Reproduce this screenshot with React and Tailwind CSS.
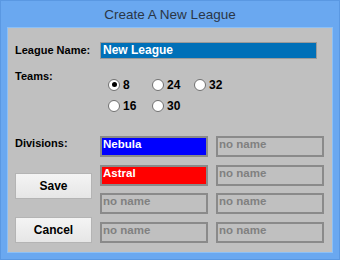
import React, { useState } from 'react';

const labelFont = { fontFamily: '"Liberation Sans", Arial, sans-serif' };

function Radio({ label, checked, onClick }) {
  return (
    <div className="flex items-center h-[21.5px] cursor-pointer" onClick={onClick}>
      <span className="w-[12px] h-[12px] rounded-full bg-white border border-[#707070] flex items-center justify-center">
        {checked && <span className="w-[5px] h-[5px] rounded-full bg-black" />}
      </span>
      <span className="ml-[3px] text-[12px] font-bold text-black leading-none">{label}</span>
    </div>
  );
}

function DivisionBox({ name, color }) {
  const filled = !!name;
  return (
    <div
      className={`h-[21px] border-2 border-[#8a8a8a] px-[1px] text-[11.5px] font-bold leading-[13px] ${
        filled ? 'text-white' : 'text-[#808080]'
      }`}
      style={filled ? { backgroundColor: color } : undefined}
    >
      {filled ? name : 'no name'}
    </div>
  );
}

export default function App() {
  const [teams, setTeams] = useState(8);
  const divisions = [
    { name: 'Nebula', color: '#0000ff' },
    { name: '', color: '' },
    { name: 'Astral', color: '#ff0000' },
    { name: '', color: '' },
    { name: '', color: '' },
    { name: '', color: '' },
    { name: '', color: '' },
    { name: '', color: '' },
  ];

  return (
    <div className="w-[340px] h-[260px] bg-[#6aa8f0] border border-[#5a98e2] flex flex-col" style={labelFont}>
      {/* title */}
      <div className="h-[26px] flex items-center justify-center text-[13.5px] text-[#2a3645] pt-[2px]">
        Create A New League
      </div>

      {/* panel */}
      <div className="ml-[6px] w-[326px] h-[226px] border border-[#8cc0f6] bg-[#c0c0c0] pl-[7px] pt-[14px]">
        {/* league name */}
        <div className="flex items-center">
          <div className="w-[85px] text-[11px] font-bold text-black">League Name:</div>
          <div className="w-[217px] h-[17px] bg-[#0070b8] border border-[#9a9a9a] px-[2px] text-[12px] font-bold text-white leading-[15px]">
            New League
          </div>
        </div>

        {/* teams */}
        <div className="flex mt-[11px]">
          <div className="w-[85px] text-[11px] font-bold text-black leading-[13px]">Teams:</div>
          <div className="grid grid-cols-[44px_42px_44px] mt-[4px] pl-[8px]">
            {[8, 24, 32, 16, 30].map((n) => (
              <Radio key={n} label={n} checked={teams === n} onClick={() => setTeams(n)} />
            ))}
          </div>
        </div>

        {/* divisions */}
        <div className="flex mt-[19px]">
          <div className="w-[85px] flex flex-col">
            <div className="text-[11px] font-bold text-black leading-[13px] mt-[1px]">Divisions:</div>
            <button className="mt-[23px] w-[77px] h-[26px] border border-[#b4b4b4] bg-gradient-to-b from-[#f4f4f4] to-[#e6e6e6] text-[12px] font-bold text-black">
              Save
            </button>
            <button className="mt-[18px] w-[77px] h-[26px] border border-[#b4b4b4] bg-gradient-to-b from-[#f4f4f4] to-[#e6e6e6] text-[12px] font-bold text-black">
              Cancel
            </button>
          </div>
          <div className="grid grid-cols-[108px_108px] gap-x-[8px] gap-y-[7.5px]">
            {divisions.map((d, i) => (
              <DivisionBox key={i} name={d.name} color={d.color} />
            ))}
          </div>
        </div>
      </div>
    </div>
  );
}
